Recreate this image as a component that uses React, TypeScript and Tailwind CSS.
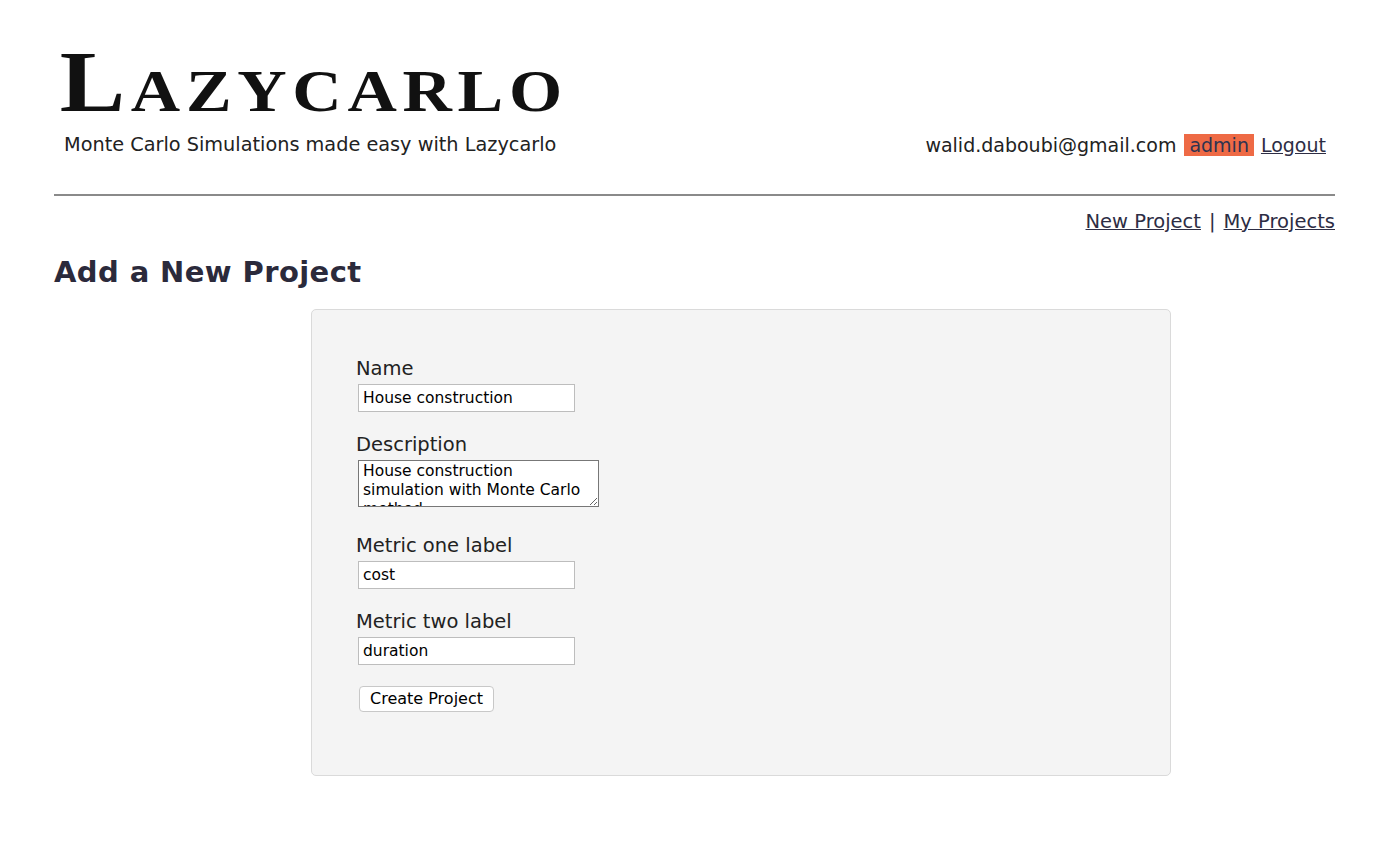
import React from "react";

const verdana = { fontFamily: '"DejaVu Sans", Verdana, sans-serif' };

function Field({ label, value }: { label: string; value: string }) {
  return (
    <div className="mb-[21px]">
      <div className="text-[19.5px] leading-[24px] text-[#222]">{label}</div>
      <input
        readOnly
        value={value}
        className="mt-[3px] ml-[2px] block h-[28px] w-[217px] border border-[#bdbdbd] bg-white px-[4px] text-[15.5px] text-black outline-none"
        style={verdana}
      />
    </div>
  );
}

export default function App() {
  return (
    <div className="min-h-[842px] bg-white text-[#222]" style={verdana}>
      <div className="pl-[54px] pr-[65px]">
        {/* header */}
        <div className="flex items-end justify-between pt-[42px]">
          <div>
            <div
              className="h-[80px] origin-left scale-x-[1.14] pl-[5px] leading-[80px] font-bold tracking-[5px] whitespace-nowrap text-[#111]"
              style={{ fontFamily: '"Liberation Serif", "Times New Roman", serif' }}
            >
              <span className="text-[86px]">L</span>
              <span className="text-[60px]">AZYCARLO</span>
            </div>
            <div className="mt-[12px] pl-[10px] text-[19.3px] leading-[22px]">
              Monte Carlo Simulations made easy with Lazycarlo
            </div>
          </div>
          <div className="flex items-center text-[19px] leading-[22px]">
            <span>walid.daboubi@gmail.com</span>
            <span className="ml-[8px] bg-[#ee6a45] px-[5px] text-[#2e3350]">admin</span>
            <a href="#" className="ml-[7px] text-[#2d2d44] underline">Logout</a>
            <span className="w-[9px]" />
          </div>
        </div>

        <div className="mt-[38px] h-[2px] bg-[#8a8a8a]" />

        <div className="mt-[14px] text-right text-[19.5px] leading-[24px] text-[#2d2d44]">
          <a href="#" className="underline">New Project</a>
          <span className="mx-[8px]">|</span>
          <a href="#" className="underline">My Projects</a>
        </div>

        <h1 className="mt-[21px] text-[29px] leading-[34px] font-bold tracking-[0.4px] text-[#2b2a3b]">
          Add a New Project
        </h1>

        {/* form card */}
        <div className="mt-[20px] ml-[257px] h-[467px] w-[860px] rounded-[5px] border border-[#dadada] bg-[#f4f4f4] pt-[47px] pl-[44px]">
          <Field label="Name" value="House construction" />
          <div className="mb-[27px]">
            <div className="text-[19.5px] leading-[24px] text-[#222]">Description</div>
            <textarea
              readOnly
              value="House construction simulation with Monte Carlo method"
              className="mt-[3px] ml-[2px] block h-[47px] w-[241px] resize overflow-hidden border border-[#777] bg-white px-[4px] pt-[1px] text-[15.5px] leading-[19px] text-black outline-none"
              style={verdana}
            />
          </div>
          <Field label="Metric one label" value="cost" />
          <Field label="Metric two label" value="duration" />
          <button
            className="ml-[3px] h-[26px] rounded-[4px] border border-[#c8c8c8] bg-white px-[10px] text-[16px] text-black"
            style={verdana}
          >
            Create Project
          </button>
        </div>
      </div>
    </div>
  );
}
